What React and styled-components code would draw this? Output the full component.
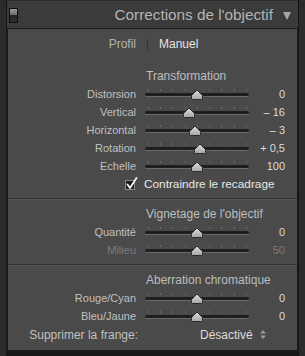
import styled, { createGlobalStyle } from "styled-components";

const GlobalStyle = createGlobalStyle`
  html, body {
    margin: 0;
    padding: 0;
    background: #2b2b2b;
  }
  body {
    font-family: "Liberation Sans", Arial, sans-serif;
    -webkit-font-smoothing: antialiased;
  }
`;

const Frame = styled.div`
  margin-left: 6px;
  width: 291px;
  height: 356px;
  border-left: 1px solid #141414;
  border-right: 1px solid #141414;
  background: #181818;
  display: flex;
  flex-direction: column;
`;

const Header = styled.div`
  height: 27px;
  flex: none;
  background: #3b3b3b;
  border-top: 1px solid #2a2a2a;
  display: flex;
  align-items: center;
  padding: 0 4px 0 2px;
  gap: 10px;
`;

const Toggle = styled.div`
  width: 7px;
  height: 13px;
  border: 1px solid #101010;
  background: linear-gradient(#9a9a9a 0%, #6c6c6c 45%, #262626 50%, #2e2e2e 100%);
  margin-top: 1px;
`;

const Title = styled.div`
  flex: 1;
  text-align: right;
  font-size: 15.3px;
  color: #b4b4b4;
  margin-top: 1px;
`;

const Arrow = styled.div`
  width: 0;
  height: 0;
  border-left: 4.5px solid transparent;
  border-right: 4.5px solid transparent;
  border-top: 8px solid #a8a8a8;
  margin: 2px 3px 0 0;
`;

const Panel = styled.div`
  height: 321px;
  flex: none;
  border: 1px solid #1c1c1c;
  background: #4a4a4a;
  display: flex;
  flex-direction: column;
`;

const Tabs = styled.div`
  height: 30px;
  display: flex;
  align-items: center;
  justify-content: center;
  font-size: 12px;
  padding-left: 2px;
  gap: 11px;
`;

const Tab = styled.span`
  color: ${(p) => (p.$active ? "#e4e4e4" : "#b2b2b2")};
`;

const TabDivider = styled.span`
  width: 1px;
  height: 11px;
  background: #363636;
`;

const Section = styled.div`
  padding: ${(p) => p.$pad || "5px 0"};
  display: grid;
  grid-template-columns: 128px 104px 1fr;
  grid-auto-rows: 18px;
  column-gap: 9px;
  padding-right: 12px;
  border-bottom: ${(p) => (p.$last ? "none" : "1px solid #333")};
  box-shadow: ${(p) => (p.$last ? "none" : "0 1px 0 #555")};
  margin-bottom: ${(p) => (p.$last ? "0" : "1px")};
`;

const Heading = styled.div`
  grid-column: 2 / 4;
  display: flex;
  align-items: center;
  font-size: 12px;
  color: #bebebe;
  padding-left: 1px;
`;

const Label = styled.div`
  grid-column: 1;
  text-align: right;
  display: flex;
  align-items: center;
  justify-content: flex-end;
  font-size: 11px;
  color: ${(p) => (p.$dim ? "#7c7c7c" : "#c0c0c0")};
`;

const Value = styled.div`
  grid-column: 3;
  display: flex;
  align-items: center;
  justify-content: flex-end;
  font-size: 11px;
  color: ${(p) => (p.$dim ? "#7c7c7c" : "#dcdcdc")};
`;

const Track = styled.div`
  grid-column: 2;
  position: relative;
  height: 18px;
`;

const Rail = styled.div`
  position: absolute;
  left: 0;
  right: 0;
  top: 8px;
  height: 3px;
  border-radius: 2px;
  background: #1e1e1e;
  box-shadow: 0 1px 0 #6a6a6a;
`;

const Tick = styled.div`
  position: absolute;
  top: 4px;
  width: 1px;
  height: 2px;
  background: #6c6c6c;
`;

const Thumb = styled.svg`
  position: absolute;
  top: 4px;
  width: 12px;
  height: 11px;
  margin-left: -6px;
`;

const CheckRow = styled.div`
  grid-column: 1 / 4;
  display: flex;
  align-items: center;
  padding-left: 117px;
  gap: 9px;
  font-size: 11.8px;
  color: #e8e8e8;
`;

const Box = styled.div`
  position: relative;
  width: 8px;
  height: 8px;
  border: 1px solid #8a8a8a;
  background: #1c1c1c;
  margin-top: 2px;

  svg {
    position: absolute;
    left: 0;
    top: -4px;
  }
`;

const FrangeLabel = styled(Label)`
  font-size: 12px;
  margin-right: -2px;
  height: 19px;
`;

const Popup = styled.div`
  grid-column: 2 / 4;
  display: flex;
  align-items: center;
  gap: 7px;
  padding-left: 55px;
  font-size: 12px;
  color: #dcdcdc;
  height: 19px;
`;

const Updown = styled.svg`
  width: 6px;
  height: 9px;
`;

const TICKS = [0.03, 0.147, 0.264, 0.381, 0.5, 0.617, 0.734, 0.851, 0.97];

const Slider = ({ value, min, max, dim }) => {
  const pos = ((value - min) / (max - min)) * 100;
  return (
    <Track>
      {TICKS.map((t) => (
        <Tick key={t} style={{ left: `${t * 100}%` }} />
      ))}
      <Rail />
      <Thumb viewBox="0 0 12 11" style={{ left: `${pos}%` }}>
        <defs>
          <linearGradient id="tg" x1="0" y1="0" x2="0" y2="1">
            <stop offset="0" stopColor="#dedede" />
            <stop offset="1" stopColor="#a6a6a6" />
          </linearGradient>
        </defs>
        <path
          d="M0.5 9.5 L0.5 6.5 L6 1 L11.5 6.5 L11.5 9.5 Q11.5 10.5 10.5 10.5 L1.5 10.5 Q0.5 10.5 0.5 9.5 Z"
          fill="url(#tg)"
          stroke="#2a2a2a"
          strokeWidth="1"
        />
      </Thumb>
    </Track>
  );
};

const Row = ({ label, value, display, min, max, dim }) => (
  <>
    <Label $dim={dim}>{label}</Label>
    <Slider value={value} min={min} max={max} dim={dim} />
    <Value $dim={dim}>{display}</Value>
  </>
);

const transformation = [
  { label: "Distorsion", value: 0, display: "0", min: -100, max: 100 },
  { label: "Vertical", value: -16, display: "– 16", min: -100, max: 100 },
  { label: "Horizontal", value: -3, display: "– 3", min: -100, max: 100 },
  { label: "Rotation", value: 0.5, display: "+ 0,5", min: -10, max: 10 },
  { label: "Echelle", value: 100, display: "100", min: 50, max: 150 },
];

const App = () => (
  <>
    <GlobalStyle />
    <Frame>
      <Header>
        <Toggle />
        <Title>Corrections de l'objectif</Title>
        <Arrow />
      </Header>
      <Panel>
        <Tabs>
          <Tab>Profil</Tab>
          <TabDivider />
          <Tab $active>Manuel</Tab>
        </Tabs>
        <Section $pad="8px 0 5px">
          <Heading>Transformation</Heading>
          {transformation.map((r) => (
            <Row key={r.label} {...r} />
          ))}
          <CheckRow>
            <Box>
              <svg width="12" height="13" viewBox="0 0 12 13">
                <path
                  d="M1.5 7.5 L4 11 L10.5 1"
                  fill="none"
                  stroke="#f2f2f2"
                  strokeWidth="1.8"
                  strokeLinecap="round"
                  strokeLinejoin="round"
                />
              </svg>
            </Box>
            Contraindre le recadrage
          </CheckRow>
        </Section>
        <Section>
          <Heading>Vignetage de l'objectif</Heading>
          <Row label="Quantité" value={0} display="0" min={-100} max={100} />
          <Row label="Milieu" value={50} display="50" min={0} max={100} dim />
        </Section>
        <Section $last>
          <Heading>Aberration chromatique</Heading>
          <Row label="Rouge/Cyan" value={0} display="0" min={-100} max={100} />
          <Row label="Bleu/Jaune" value={0} display="0" min={-100} max={100} />
          <FrangeLabel>Supprimer la frange:</FrangeLabel>
          <Popup>
            Désactivé
            <Updown viewBox="0 0 6 9">
              <path d="M3 0 L6 3.5 L0 3.5 Z M3 9 L6 5.5 L0 5.5 Z" fill="#9a9a9a" />
            </Updown>
          </Popup>
        </Section>
      </Panel>
    </Frame>
  </>
);

export default App;
